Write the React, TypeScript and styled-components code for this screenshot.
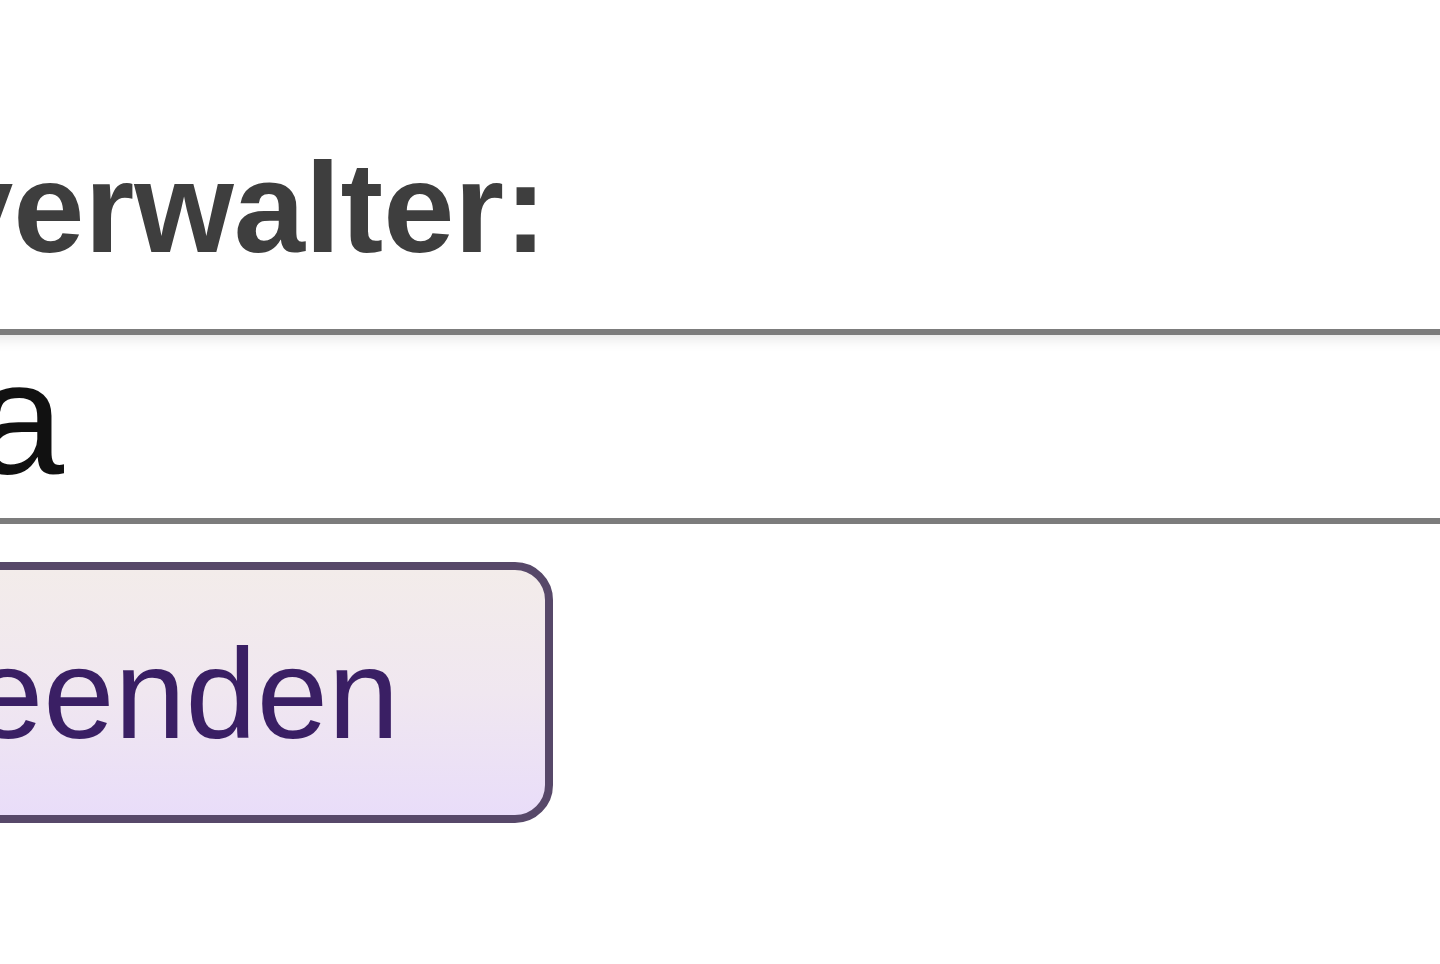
import React from 'react';
import styled, { createGlobalStyle } from 'styled-components';

const GlobalStyle = createGlobalStyle`
  html, body {
    margin: 0;
    padding: 0;
    background: #ffffff;
    overflow: hidden;
  }
  body {
    font-family: 'Liberation Sans', Arial, sans-serif;
  }
`;

const Page = styled.div`
  display: flex;
  flex-direction: column;
  align-items: flex-start;
  margin-left: -58px;
  padding-top: 144px;
  width: 1700px;
`;

const Label = styled.label`
  display: block;
  font-size: 128px;
  line-height: 1;
  font-weight: 700;
  color: #3e3e3e;
  white-space: nowrap;
`;

const TextInput = styled.input`
  box-sizing: border-box;
  margin: 57px 0 0 0;
  width: 1650px;
  height: 195px;
  padding: 0 0 18px 27px;
  border: 6px solid #7c7c7c;
  border-radius: 0;
  background: #ffffff;
  box-shadow: inset 0 12px 14px -8px rgba(0, 0, 0, 0.1);
  font-family: 'Liberation Sans', Arial, sans-serif;
  font-size: 160px;
  line-height: 1;
  color: #111111;
  outline: none;
`;

const Button = styled.button`
  box-sizing: border-box;
  margin-top: 38px;
  padding: 60px 146px 57px 22px;
  border: 8px solid #574869;
  border-radius: 38px;
  background: linear-gradient(to bottom, #f3ecea 0%, #f0e7f0 50%, #e9ddf9 100%);
  font-family: 'Liberation Sans', Arial, sans-serif;
  font-size: 128px;
  line-height: 1;
  color: #3a1f64;
  white-space: nowrap;
  cursor: pointer;
`;

const App = () => {
  return (
    <>
      <GlobalStyle />
      <Page>
        <Label htmlFor="verwalter">verwalter:</Label>
        <TextInput id="verwalter" type="text" defaultValue="a" readOnly />
        <Button type="button">eenden</Button>
      </Page>
    </>
  );
};

export default App;
